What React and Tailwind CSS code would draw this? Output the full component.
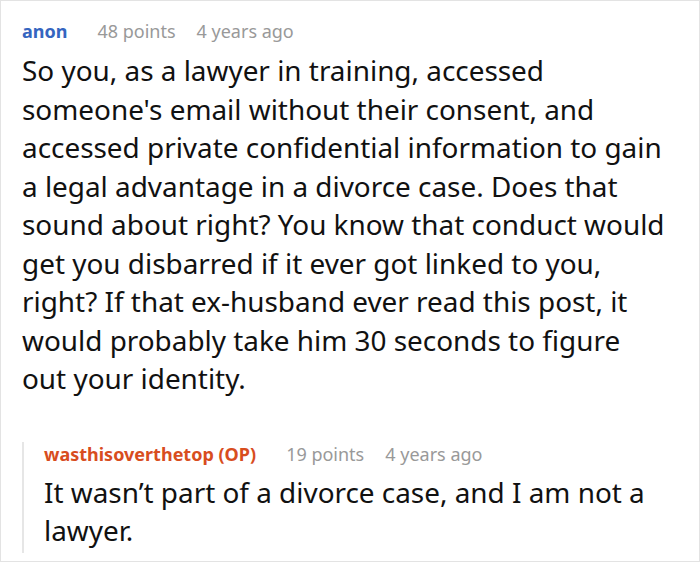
const Meta = ({ name, nameClass, points, age }) => (
  <div className="flex items-center text-[18px] leading-[24px]">
    <span className={`font-bold ${nameClass}`}>{name}</span>
    <span className="ml-[30px] text-[#999]">{points}</span>
    <span className="ml-[21px] text-[#999]">{age}</span>
  </div>
);

export default function App() {
  return (
    <div
      className="w-[700px] h-[562px] bg-white border border-[#e3e3e3] pt-[18px] pl-[21px] pr-[32px] text-[#111]"
      style={{ fontFamily: '"Noto Sans", sans-serif' }}
    >
      <Meta name="anon" nameClass="text-[#3565c0]" points="48 points" age="4 years ago" />
      <p className="mt-[8px] text-[27.9px] leading-[38.5px]">
        So you, as a lawyer in training, accessed someone's email without their consent, and
        accessed private confidential information to gain a legal advantage in a divorce case.
        Does that sound about right? You know that conduct would get you disbarred if it ever got
        linked to you, right? If that ex-husband ever read this post, it would probably take him
        30 seconds to figure out your identity.
      </p>

      <div className="mt-[56px] border-l-2 border-[#e6e6e6] pl-[20px] pb-[3px]">
        <div className="-mt-[12px]">
          <Meta
            name="wasthisoverthetop (OP)"
            nameClass="text-[#d84d1e]"
            points="19 points"
            age="4 years ago"
          />
        </div>
        <p className="mt-[7px] text-[27.9px] leading-[38.5px]">
          It wasn’t part of a divorce case, and I am not a lawyer.
        </p>
      </div>
    </div>
  );
}
